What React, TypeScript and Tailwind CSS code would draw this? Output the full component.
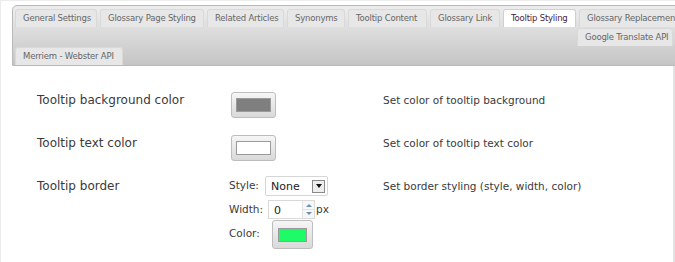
import React from 'react';

type TabProps = { label: string; width: number; active?: boolean; className?: string };

const tabWidths: Record<string, string> = {
  'General Settings': 'w-[82px]',
  'Glossary Page Styling': 'w-[104px]',
  'Related Articles': 'w-[77px]',
  'Synonyms': 'w-[58px]',
  'Tooltip Content': 'w-[79px]',
  'Glossary Link': 'w-[70px]',
  'Tooltip Styling': 'w-[73px]',
  'Glossary Replacement': 'w-[110px]',
  'Google Translate API': 'w-[96px]',
  'Merriem - Webster API': 'w-[108px]',
};

function Tab({ label, active, className = '' }: TabProps) {
  return (
    <div
      className={`${tabWidths[label]} ${className} h-[18px] shrink-0 overflow-hidden whitespace-nowrap rounded-t-[3px] border border-b-0 pl-[7px] flex items-center text-[8.5px] tracking-[-0.2px] ${
        active ? 'bg-white border-[#d0d0d0] text-[#4a2343]' : 'bg-[#e7e7e7] border-[#d9d9d9] text-[#666]'
      }`}
    >
      {label}
    </div>
  );
}

function Swatch({ fill, big }: { fill: string; big?: boolean }) {
  return (
    <div
      className={`${
        big ? 'w-[45px] h-[26px]' : 'w-[41px] h-[29px]'
      } rounded-[3px] border border-[#bdbdbd] bg-linear-to-b from-[#f6f6f6] to-[#d9d9d9] flex items-center justify-center`}
    >
      <div
        className={`${big ? 'w-[35px]' : 'w-[29px]'} h-[14px] border border-[#9a9a9a]`}
        style={{ backgroundColor: fill }}
      />
    </div>
  );
}

export default function App() {
  const row1 = [
    'General Settings',
    'Glossary Page Styling',
    'Related Articles',
    'Synonyms',
    'Tooltip Content',
    'Glossary Link',
    'Tooltip Styling',
    'Glossary Replacement',
  ];

  return (
    <div className="w-[675px] h-[262px] overflow-hidden bg-white border-l border-t border-[#ececec] font-['DejaVu_Sans',sans-serif]">
      {/* Tab strip */}
      <div className="pt-[4px] pl-[11px]">
        <div className="w-[720px] h-[61px] overflow-hidden rounded-tl-[5px] border border-[#b9b9b9] bg-linear-to-b from-[#ededed] to-[#c5c5c5] pt-[3px] pl-[2px]">
          <div className="flex gap-[3px]">
            {row1.map((t) => (
              <Tab key={t} label={t} width={0} active={t === 'Tooltip Styling'} />
            ))}
          </div>
          <div className="flex mt-[1px] pl-[562px]">
            <Tab label="Google Translate API" width={0} />
          </div>
          <div className="flex mt-[1px]">
            <Tab label="Merriem - Webster API" width={0} />
          </div>
        </div>
      </div>

      {/* Settings */}
      <div className="h-[200px] border-r-2 border-[#e3e3e3] pl-[36px] pt-[26px] text-[#3a3a3a]">
        <div className="flex items-start">
          <div className="w-[192px] text-[12px] leading-[16px]">Tooltip background color</div>
          <div className="w-[154px] pl-[2px]">
            <Swatch fill="#7f7f7f" big />
          </div>
          <div className="text-[10.5px] leading-[16px]">Set color of tooltip background</div>
        </div>

        <div className="flex items-start mt-[17px]">
          <div className="w-[192px] text-[12px] leading-[16px]">Tooltip text color</div>
          <div className="w-[154px] pl-[2px]">
            <Swatch fill="#ffffff" big />
          </div>
          <div className="text-[10.5px] leading-[16px]">Set color of tooltip text color</div>
        </div>

        <div className="flex items-start mt-[15px]">
          <div className="w-[192px] pt-[2px] text-[12px] leading-[16px]">Tooltip border</div>
          <div className="w-[154px] text-[10.5px]">
            <div className="flex items-center">
              <span className="w-[36px]">Style:</span>
              <div className="w-[63px] h-[20px] rounded-[2px] border border-[#d6d6d6] bg-white flex items-center justify-between pl-[5px] pr-[2px]">
                <span className="text-[11px] text-[#222] pt-[3px]">None</span>
                <span className="w-[13px] h-[13px] border border-[#8a8a8a] bg-[#eeeeee] flex items-center justify-center">
                  <span className="w-0 h-0 border-l-[3px] border-r-[3px] border-t-[4px] border-l-transparent border-r-transparent border-t-[#111]" />
                </span>
              </div>
            </div>
            <div className="flex items-center mt-[4px]">
              <span className="w-[39px]">Width:</span>
              <div className="w-[47px] h-[19px] border border-[#d9d9d9] bg-white flex items-center justify-between pl-[5px]">
                <span className="text-[11px] text-[#222] pt-[3px]">0</span>
                <span className="w-[12px] h-full border-l border-[#e3e3e3] flex flex-col items-center justify-center gap-[2px] bg-[#f7f7f7]">
                  <span className="w-0 h-0 border-l-[3px] border-r-[3px] border-b-[3px] border-l-transparent border-r-transparent border-b-[#6d8fb8]" />
                  <span className="w-full h-px bg-[#e3e3e3]" />
                  <span className="w-0 h-0 border-l-[3px] border-r-[3px] border-t-[3px] border-l-transparent border-r-transparent border-t-[#6d8fb8]" />
                </span>
              </div>
              <span className="ml-[1px]">px</span>
            </div>
            <div className="flex items-start mt-[1px]">
              <span className="w-[43px] pt-[6px]">Color:</span>
              <Swatch fill="#1dfc66" />
            </div>
          </div>
          <div className="pt-[2px] text-[10.5px] leading-[16px]">Set border styling (style, width, color)</div>
        </div>
      </div>
    </div>
  );
}
